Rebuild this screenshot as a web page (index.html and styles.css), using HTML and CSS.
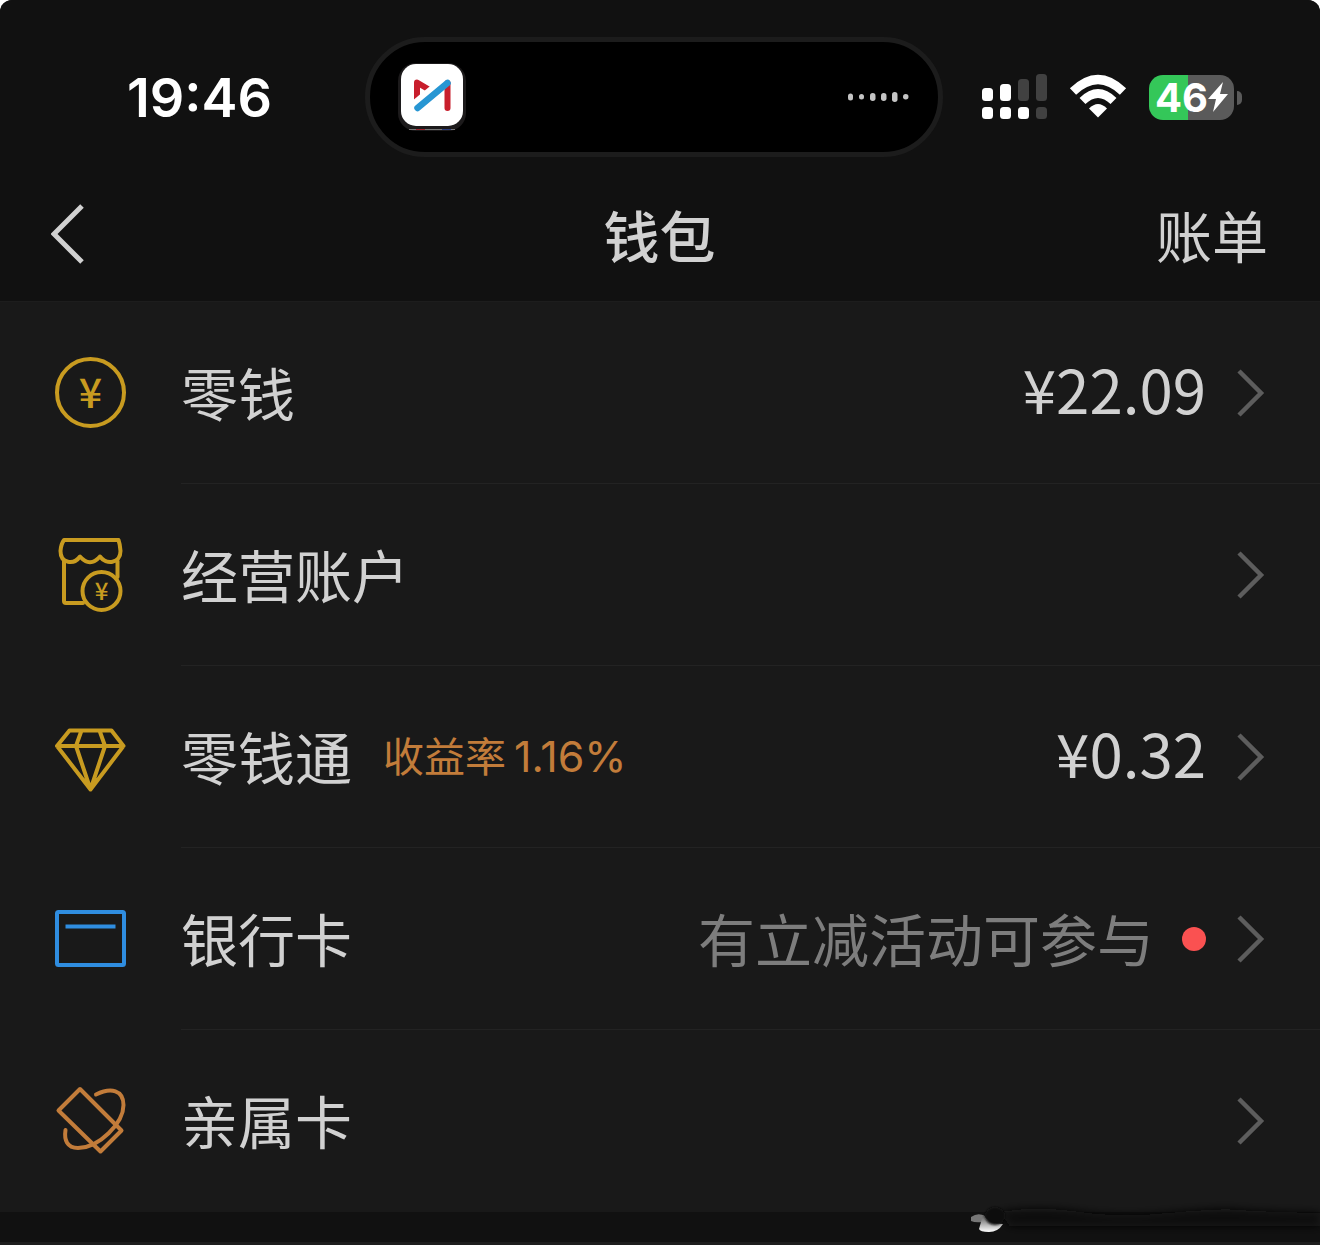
FILE: index.html
```html
<!DOCTYPE html>
<html lang="zh-CN">
<head>
<meta charset="utf-8">
<meta name="viewport" content="width=device-width, initial-scale=1">
<title>钱包</title>
<link rel="stylesheet" href="styles.css">
</head>
<body>
<svg class="defs" aria-hidden="true">
  <symbol id="chevron" viewBox="0 0 28 48"><path d="M2 2 24 24 2 46" fill="none" stroke="currentColor" stroke-width="4.500"/></symbol>
</svg>
<div class="screen">
  <div class="status">
    <time class="clock">19:46</time>
    <div class="island">
      <svg class="app" viewBox="0 0 70 70" aria-hidden="true">
        <rect x="1" y="1" width="68" height="68" rx="18" fill="#1c1a1b"/>
        <path d="M12 67.500h46" stroke="#777" stroke-width="1"/>
        <path d="M19 67.500h9" stroke="#a0232c" stroke-width="1"/>
        <path d="M45 67.500h9" stroke="#2a3c80" stroke-width="1"/>
        <rect x="4" y="2" width="62" height="62" rx="15" fill="#fff"/>
        <path d="M20 38V20.500L31 27" fill="none" stroke="#c81e2c" stroke-width="6" stroke-linejoin="round" stroke-linecap="round"/>
        <path d="M50.500 21v25" stroke="#c81e2c" stroke-width="6" stroke-linecap="round"/>
        <path d="M17 42 40 23" stroke="#fff" stroke-width="7"/>
        <path d="M20.500 46 50.500 21" stroke="#2796d3" stroke-width="6.500" stroke-linecap="round"/>
      </svg>
      <svg class="wave" viewBox="0 0 62 12" aria-hidden="true" fill="#c4c4c4">
        <rect x="0" y="2.500" width="5" height="7" rx="2.500"/><rect x="11" y="3" width="5" height="5.500" rx="2.500"/><rect x="22" y="2" width="5.500" height="8" rx="2.700"/><rect x="33" y="2" width="5.500" height="8" rx="2.700"/><rect x="44" y="1" width="5.500" height="10" rx="2.700"/><rect x="55" y="3" width="5.500" height="5.500" rx="2.700"/>
      </svg>
    </div>
    <div class="indicators">
      <svg class="signal" viewBox="0 0 65 46" aria-hidden="true">
        <g fill="#fff"><rect y="14" width="11" height="13" rx="3.500"/><rect x="18" y="10" width="11" height="17" rx="3.500"/><rect y="33" width="11" height="12" rx="3.500"/><rect x="18" y="33" width="11" height="12" rx="3.500"/><rect x="36" y="33" width="11" height="12" rx="3.500"/></g>
        <g fill="#414141"><rect x="36" y="5" width="11" height="22" rx="3.500"/><rect x="54" y="0" width="11" height="27" rx="3.500"/><rect x="54" y="33" width="11" height="12" rx="3.500"/></g>
      </svg>
      <svg class="wifi" viewBox="0 0 58 46" aria-hidden="true">
        <path d="M4 17.500Q29-6.500 54 17.500" fill="none" stroke="#fff" stroke-width="9"/>
        <path d="M13.500 27Q29 12 44.500 27" fill="none" stroke="#fff" stroke-width="8.500"/>
        <path d="M29 43.500 20 34.500Q29 25.500 38 34.500Z" fill="#fff"/>
      </svg>
      <div class="battery">
        <span class="level">46</span>
        <svg class="bolt" viewBox="0 0 20 32" aria-hidden="true"><path d="M15 1 0 18h8L5 31 20 13h-8Z" fill="#fff"/></svg>
      </div>
    </div>
  </div>
  <header class="nav">
    <button class="back" type="button" aria-label="返回"><svg viewBox="0 0 34 62" aria-hidden="true"><path d="M31 3 3 31 31 59" fill="none" stroke="#d1d1d1" stroke-width="5"/></svg></button>
    <h1>钱包</h1>
    <a class="bill" href="#bill">账单</a>
  </header>
  <main class="list">
    <a class="row" href="#balance">
      <svg class="icon gold" viewBox="0 0 72 72" aria-hidden="true"><circle cx="36.500" cy="35.500" r="33.500"/><text x="36.500" y="51" font-size="41">¥</text></svg>
      <span class="body"><span class="name">零钱</span><span class="amount">¥22.09</span><svg class="chevron" aria-hidden="true"><use href="#chevron"/></svg></span>
    </a>
    <a class="row" href="#business">
      <svg class="icon gold" viewBox="0 0 72 72" aria-hidden="true"><path d="M10 1H64.500Q66 5 66.500 12C66.500 25 52 26 46 17.500Q36 29 26 17.500C20 26 6.500 25 6.500 12Q7 5 10 1ZM10 22V62Q10 64 12 64H29M63.500 22V38"/><circle cx="47.500" cy="52" r="19"/><text x="47.500" y="61" font-size="24">¥</text></svg>
      <span class="body"><span class="name">经营账户</span><svg class="chevron" aria-hidden="true"><use href="#chevron"/></svg></span>
    </a>
    <a class="row" href="#fund">
      <svg class="icon gold" viewBox="0 0 72 72" aria-hidden="true"><path d="M15.500 9.500H57.500L69.500 25 36.500 68.500 3 25ZM3 25H69.500M27.500 9.500 22 25 36.500 68.500 51 25 45.500 9.500"/></svg>
      <span class="body"><span class="name">零钱通</span><span class="rate">收益率<span class="percent">1.16%</span></span><span class="amount">¥0.32</span><svg class="chevron" aria-hidden="true"><use href="#chevron"/></svg></span>
    </a>
    <a class="row" href="#cards">
      <svg class="icon blue" viewBox="0 0 72 72" aria-hidden="true"><rect x="3" y="9" width="67" height="53" rx="1.500"/><path class="stripe" d="M11.500 23.500h50"/></svg>
      <span class="body"><span class="name">银行卡</span><span class="hint">有立减活动可参与</span><span class="dot"></span><svg class="chevron" aria-hidden="true"><use href="#chevron"/></svg></span>
    </a>
    <a class="row" href="#family">
      <svg class="icon bronze" viewBox="0 0 72 72" aria-hidden="true"><path d="M26 4 67.500 45.500 46.500 66.500 4.500 25.500Z"/><path d="M42 9.500C57 2 69.500 5 69.500 20C69.500 38 45 63 24 63C13 63 10 55 11.500 45"/></svg>
      <span class="body"><span class="name">亲属卡</span><svg class="chevron" aria-hidden="true"><use href="#chevron"/></svg></span>
    </a>
    <svg class="smudge" viewBox="0 0 350 60" aria-hidden="true">
      <defs>
        <filter id="haze" x="-10%" y="-50%" width="120%" height="200%"><feGaussianBlur stdDeviation="4"/></filter>
        <filter id="soft"><feGaussianBlur stdDeviation="1"/></filter>
        <linearGradient id="shine" x1="0" y1="0" x2="0" y2="1"><stop offset="0" stop-color="#555"/><stop offset="1" stop-color="#fff"/></linearGradient>
      </defs>
      <path d="M30 26Q70 20 110 26T200 27 270 24T350 27V40H40Z" fill="#111" filter="url(#haze)"/>
      <path d="M1 31Q8 26 15 30L13 36Q5 37 1 35Z" fill="#777"/>
      <path d="M13 29Q20 38 33 38Q28 46 19 46T9 43Z" fill="url(#shine)"/>
      <ellipse cx="25" cy="30" rx="10" ry="9" fill="#101010" filter="url(#soft)"/>
    </svg>
  </main>
  <div class="gap"></div>
</div>
</body>
</html>
```
FILE: styles.css
```css
* { box-sizing: border-box; }

body {
  margin: 0;
  background: #fff;
  color: #d1d1d1;
  font-family: "Noto Sans CJK SC", sans-serif;
}

a { color: inherit; text-decoration: none; }
svg { display: block; flex: none; }
.defs { position: absolute; width: 0; height: 0; }

.screen {
  min-height: 100vh;
  background: #1d1d1d;
  border-radius: 12px 12px 0 0;
  overflow: hidden;
}

/* Status bar */
.status {
  display: grid;
  grid-template-columns: 1fr auto 1fr;
  align-items: center;
  padding: 37px 12px 0 0;
  background: #111;
  font-family: Inter, sans-serif;
  color: #fff;
}
.clock {
  justify-self: end;
  margin-right: 93px;
  padding-top: 2px;
  font-size: 54px;
  line-height: 64px;
  font-weight: 600;
}
.island {
  display: flex;
  justify-content: space-between;
  align-items: center;
  width: 578px;
  height: 120px;
  padding: 0 28px 0 27px;
  border: 5px solid #1c1c1c;
  border-radius: 60px;
  background: #000;
}
.app { width: 70px; height: 70px; }
.wave { width: 62px; height: 12px; }
.indicators {
  display: flex;
  align-items: center;
  gap: 22px;
  padding-left: 39px;
}
.signal { width: 65px; height: 46px; }
.wifi { width: 58px; height: 46px; }
.battery {
  position: relative;
  display: flex;
  align-items: center;
  width: 85px;
  height: 45px;
  padding-left: 6px;
  border-radius: 14px;
  background: linear-gradient(90deg, #34c759 39px, #5a5a5a 39px);
}
.battery::after {
  content: "";
  position: absolute;
  left: 88px;
  top: 16px;
  width: 5px;
  height: 14px;
  border-radius: 0 5px 5px 0;
  background: #5a5a5a;
}
.level { font-size: 40px; line-height: 45px; font-weight: 700; }
.bolt { width: 20px; height: 32px; }

/* Title bar */
.nav {
  display: grid;
  grid-template-columns: 1fr auto 1fr;
  align-items: center;
  height: 144px;
  padding: 10px 52px 0 51px;
  background: #111;
}
.back {
  justify-self: start;
  padding: 0;
  border: 0;
  background: none;
}
.back svg { width: 34px; height: 62px; }
.nav h1 { margin: 0; font-size: 56px; line-height: 80px; font-weight: 500; }
.bill { justify-self: end; font-size: 56px; line-height: 80px; }

/* Wallet entries */
.list { position: relative; border-top: 1px solid #1d1d1d; background: #191919; }
.row { display: flex; padding-left: 54px; gap: 55px; align-items: center; }
.icon {
  width: 72px;
  height: 72px;
  overflow: visible;
  fill: none;
  stroke: currentColor;
  stroke-width: 4;
  stroke-linejoin: round;
  stroke-linecap: round;
}
.icon text { fill: currentColor; stroke: none; text-anchor: middle; font-weight: 500; }
.stripe { stroke-linecap: butt; }
.gold { color: #c89b20; }
.blue { color: #2f8de0; }
.bronze { color: #c27c3a; }
.body {
  flex: 1;
  display: flex;
  align-items: center;
  height: 182px;
  padding-right: 55px;
  border-bottom: 1px solid #232323;
}
.row:last-of-type .body { border-bottom-color: transparent; }
.name, .hint, .rate { padding-bottom: 3px; }
.name { font-size: 57px; line-height: 80px; }
.rate { margin-left: 31px; font-size: 41px; line-height: 60px; color: #c27c3a; }
.percent { margin-left: 8px; font-family: Inter, sans-serif; font-size: 43px; }
.amount, .hint, .dot { margin-left: auto; }
.amount { padding-bottom: 10px; font-size: 60px; line-height: 80px; }
.hint { font-size: 57px; line-height: 80px; color: #7d7d7d; }
.hint + .dot { margin-left: 28px; }
.dot { width: 24px; height: 24px; border-radius: 50%; background: #fa5151; }
.chevron { width: 28px; height: 48px; margin-left: 31px; color: #5d5d5d; }
.name + .chevron { margin-left: auto; }

.smudge { position: absolute; right: 0; bottom: -34px; width: 350px; height: 60px; }
.gap { height: 30px; background: #111; }
```
